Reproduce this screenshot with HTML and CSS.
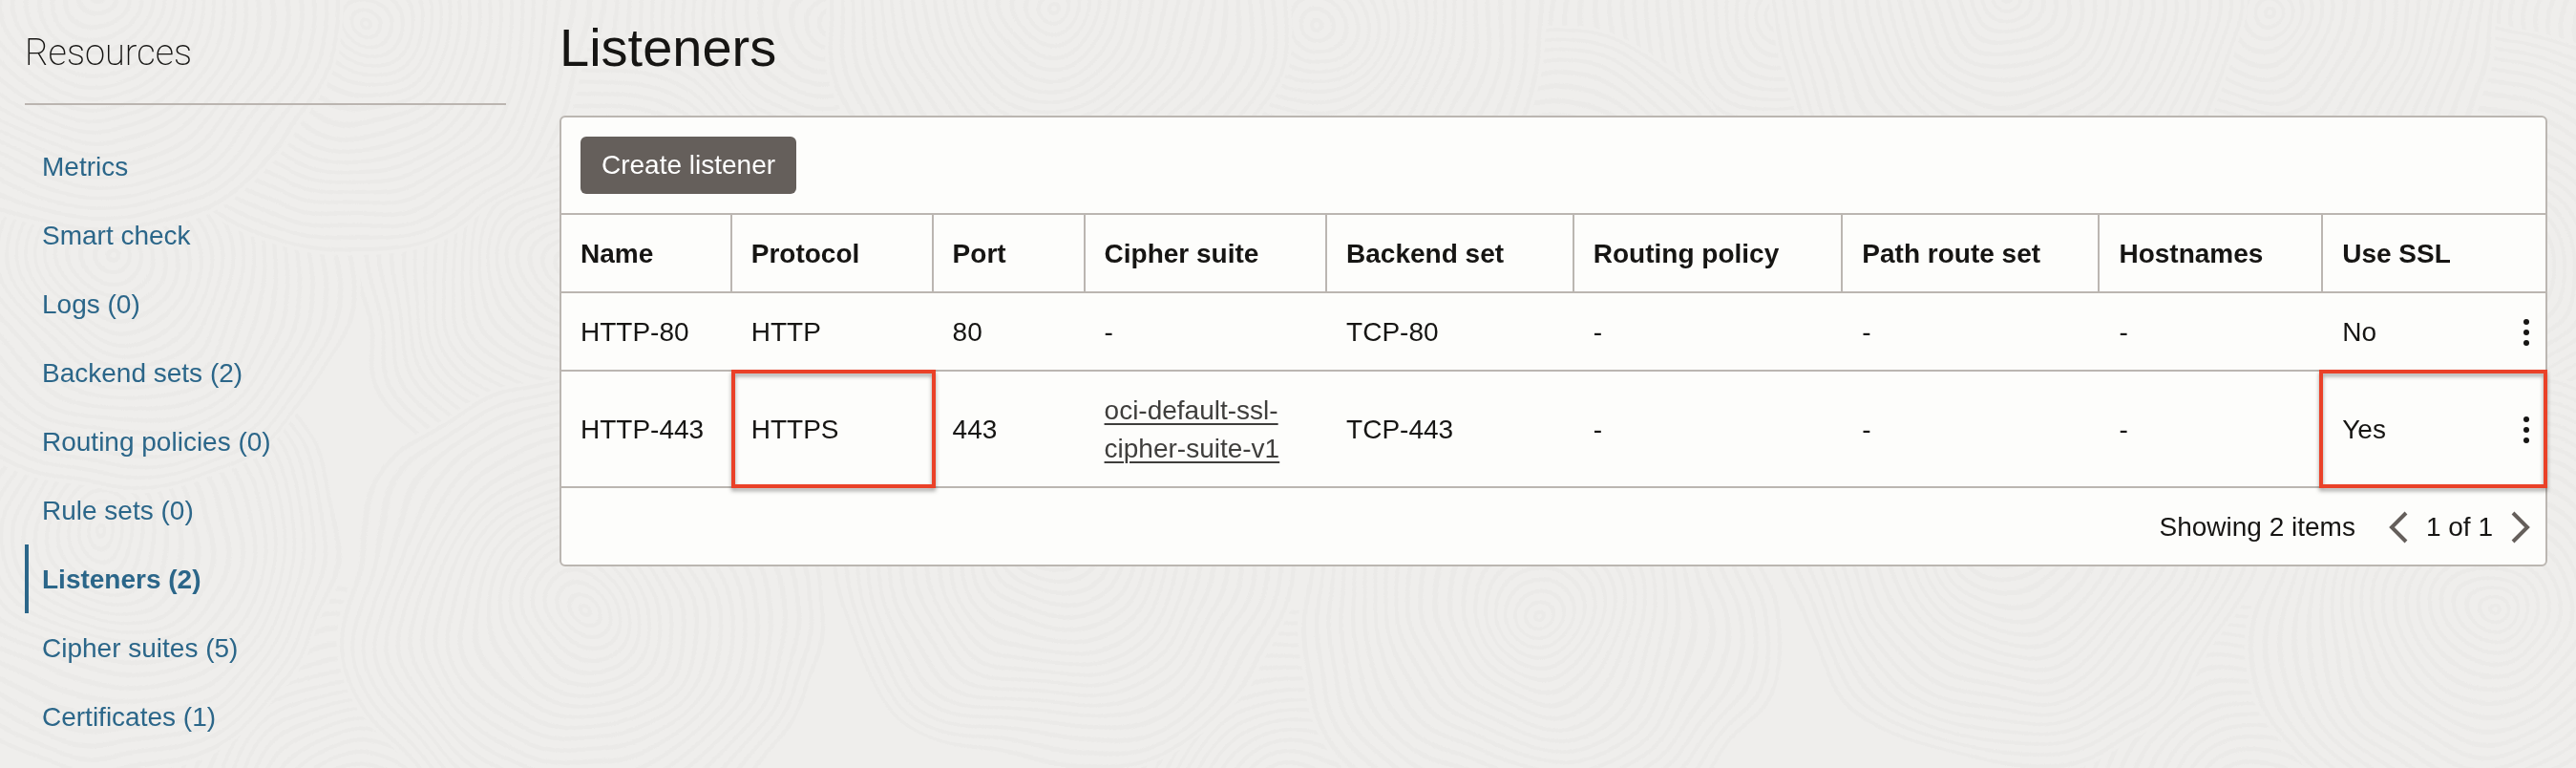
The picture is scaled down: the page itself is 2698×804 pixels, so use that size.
FILE: index.html
```html
<!DOCTYPE html>
<html lang="en">
<head>
<meta charset="utf-8">
<title>Listeners</title>
<link rel="stylesheet" href="styles.css">
</head>
<body>
<svg class="texture" aria-hidden="true">
  <defs>
    <filter id="wobble" x="0" y="0" width="100%" height="100%">
      <feTurbulence type="fractalNoise" baseFrequency="0.006" numOctaves="2" seed="4"/>
      <feDisplacementMap in="SourceGraphic" scale="50" xChannelSelector="R" yChannelSelector="G"/>
    </filter>
    <g id="rings">
      <circle r="250" class="disc"/>
      <circle r="244"/><circle r="232"/><circle r="220"/><circle r="208"/><circle r="196"/><circle r="184"/><circle r="172"/><circle r="160"/><circle r="148"/><circle r="136"/><circle r="124"/><circle r="112"/><circle r="100"/><circle r="88"/><circle r="76"/><circle r="64"/><circle r="52"/><circle r="40"/><circle r="28"/><circle r="16"/><circle r="5"/>
    </g>
    <pattern id="swirls" width="1000" height="1080" patternUnits="userSpaceOnUse">
      <use href="#rings" x="890" y="50"/><use href="#rings" x="-110" y="50"/>
      <use href="#rings" x="400" y="900"/>
      <use href="#rings" x="640" y="310"/>
      <use href="#rings" x="1140" y="590"/><use href="#rings" x="140" y="590"/>
      <use href="#rings" x="150" y="300"/><use href="#rings" x="1150" y="300"/>
      <use href="#rings" x="640" y="670"/>
      <use href="#rings" x="405" y="50"/>
      <use href="#rings" x="130" y="30"/><use href="#rings" x="1130" y="30"/>
    </pattern>
  </defs>
  <rect width="100%" height="100%" fill="url(#swirls)" filter="url(#wobble)"/>
</svg>
<div class="page">
  <aside class="sidebar">
    <h2 class="sidebar-title">Resources</h2>
    <nav class="nav" aria-label="Resources">
      <a class="nav-link" href="#metrics">Metrics</a>
      <a class="nav-link" href="#smart-check">Smart check</a>
      <a class="nav-link" href="#logs">Logs (0)</a>
      <a class="nav-link" href="#backend-sets">Backend sets (2)</a>
      <a class="nav-link" href="#routing-policies">Routing policies (0)</a>
      <a class="nav-link" href="#rule-sets">Rule sets (0)</a>
      <a class="nav-link current" href="#listeners" aria-current="page">Listeners (2)</a>
      <a class="nav-link" href="#cipher-suites">Cipher suites (5)</a>
      <a class="nav-link" href="#certificates">Certificates (1)</a>
    </nav>
  </aside>
  <main class="content" id="listeners">
    <h1 class="title">Listeners</h1>
    <section class="panel">
      <div class="toolbar"><button class="create" type="button">Create listener</button></div>
      <table class="table">
        <colgroup>
          <col class="c-name"><col class="c-protocol"><col class="c-port"><col class="c-cipher"><col class="c-backend"><col class="c-routing"><col class="c-path"><col class="c-host"><col class="c-ssl">
        </colgroup>
        <thead>
          <tr><th scope="col">Name</th><th scope="col">Protocol</th><th scope="col">Port</th><th scope="col">Cipher suite</th><th scope="col">Backend set</th><th scope="col">Routing policy</th><th scope="col">Path route set</th><th scope="col">Hostnames</th><th scope="col">Use SSL</th></tr>
        </thead>
        <tbody>
          <tr>
            <td>HTTP-80</td><td>HTTP</td><td>80</td><td>-</td><td>TCP-80</td><td>-</td><td>-</td><td>-</td>
            <td><div class="ssl">No<button class="more" type="button" aria-label="Actions for HTTP-80"><svg width="6" height="28" viewBox="0 0 6 28"><circle cx="3" cy="3" r="3"/><circle cx="3" cy="14" r="3"/><circle cx="3" cy="25" r="3"/></svg></button></div></td>
          </tr>
          <tr>
            <td>HTTP-443</td><td class="marked">HTTPS</td><td>443</td><td><a class="cipher" href="#oci-default-ssl-cipher-suite-v1">oci-default-ssl-cipher-suite-v1</a></td><td>TCP-443</td><td>-</td><td>-</td><td>-</td>
            <td class="marked"><div class="ssl">Yes<button class="more" type="button" aria-label="Actions for HTTP-443"><svg width="6" height="28" viewBox="0 0 6 28"><circle cx="3" cy="3" r="3"/><circle cx="3" cy="14" r="3"/><circle cx="3" cy="25" r="3"/></svg></button></div></td>
          </tr>
        </tbody>
      </table>
      <div class="footer">
        <span class="count">Showing 2 items</span>
        <button class="pager" type="button" aria-label="Previous page"><svg width="20" height="34" viewBox="0 0 20 34"><path d="M18 2 3 17l15 15"/></svg></button>
        <span>1 of 1</span>
        <button class="pager" type="button" aria-label="Next page"><svg width="20" height="34" viewBox="0 0 20 34"><path d="m2 2 15 15L2 32"/></svg></button>
      </div>
    </section>
  </main>
</div>
</body>
</html>
```
FILE: styles.css
```css
* { box-sizing: border-box; }

body {
  margin: 0;
  min-height: 100vh;
  background: #efeeec;
  color: #161513;
  font: 28px/40px "Liberation Sans", Arial, sans-serif;
}

.texture {
  position: fixed;
  inset: -30px;
  z-index: -1;
  width: calc(100% + 60px);
  height: calc(100% + 60px);
  fill: none;
  stroke: #ebeae8;
  stroke-width: 4;
}
.texture .disc { fill: #efeeec; stroke: none; }
.texture rect { stroke: none; }

.page {
  display: flex;
  gap: 56px;
  padding: 0 30px 0 26px;
}

.sidebar { flex: 0 0 504px; }
.sidebar-title {
  margin: 0;
  padding: 26px 0 24px;
  border-bottom: 2px solid #bbb5b0;
  font: 200 38px/58px Roboto, "Liberation Sans", sans-serif;
}
.nav {
  display: flex;
  flex-direction: column;
  margin-top: 28px;
}
.nav-link {
  padding: 17px 0 15px 14px;
  border-left: 4px solid transparent;
  color: #2b6689;
  text-decoration: none;
}
.nav-link.current {
  border-color: #2b6689;
  font-weight: bold;
}

.content { flex: 1; min-width: 0; }
.title {
  margin: 0;
  padding: 16px 0 37px;
  font-size: 56px;
  line-height: 68px;
  font-weight: normal;
}

.panel {
  border: 2px solid #bbb6b1;
  border-radius: 6px;
  background: #fdfdfb;
}
.toolbar { display: flex; padding: 20px; }
.create {
  height: 60px;
  padding: 0 22px;
  border: 0;
  border-radius: 6px;
  background: #655f5b;
  color: #fff;
  font: inherit;
}

.table {
  width: 100%;
  table-layout: fixed;
  border-collapse: separate;
  border-spacing: 0;
}
.c-name { width: 8.6%; }
.c-protocol { width: 10.15%; }
.c-port { width: 7.65%; }
.c-cipher { width: 12.2%; }
.c-backend { width: 12.45%; }
.c-routing { width: 13.55%; }
.c-path { width: 12.95%; }
.c-host { width: 11.25%; }
.c-ssl { width: 11.2%; }

th, td {
  padding: 21px 17px 19px 20px;
  border-bottom: 2px solid #bbb6b1;
  text-align: left;
  vertical-align: middle;
}
th {
  border-top: 2px solid #bbb6b1;
  border-right: 2px solid #bbb6b1;
  white-space: nowrap;
}
th:last-child { border-right: 0; }

.cipher {
  color: #3f3e3c;
  text-underline-offset: 4px;
  text-decoration-thickness: 2px;
}

.ssl {
  display: flex;
  justify-content: space-between;
  align-items: center;
}
.more, .pager {
  display: flex;
  padding: 0;
  border: 0;
  background: none;
}
.more { fill: #161513; }
.pager { fill: none; stroke: #655f5b; stroke-width: 4; }

/* Red callout drawn over a highlighted cell */
.marked { position: relative; }
.marked::after {
  content: "";
  position: absolute;
  inset: -2px -2px -2px -1px;
  border: 4px solid #ea4128;
  filter: drop-shadow(0 3px 2px rgba(0, 0, 0, 0.35));
  pointer-events: none;
}
.marked:last-child::after { left: -4px; }

.footer {
  display: flex;
  justify-content: flex-end;
  align-items: center;
  gap: 19px;
  padding: 21px 16px 19px;
}
.count { margin-right: 16px; }
```
